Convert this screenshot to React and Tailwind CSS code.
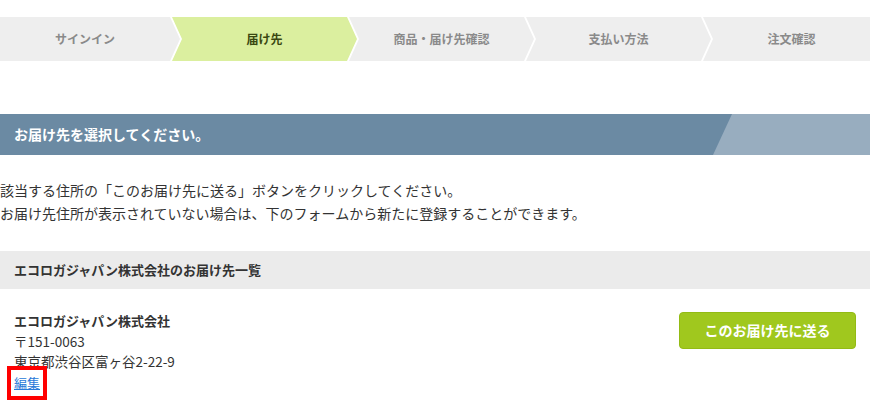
import React from 'react';

const steps = [
  { label: 'サインイン', active: false },
  { label: '届け先', active: true },
  { label: '商品・届け先確認', active: false },
  { label: '支払い方法', active: false },
  { label: '注文確認', active: false },
];

const StepBar = () => (
  <div className="flex h-[44px]">
    {steps.map((s, i) => {
      let shape = '';
      if (i === 0) {
        shape = 'w-[180px] pr-[10px] [clip-path:polygon(0_0,170px_0,100%_50%,170px_100%,0_100%)]';
      } else if (i === steps.length - 1) {
        shape = 'flex-1 -ml-[8px] pl-[10px] [clip-path:polygon(0_0,100%_0,100%_100%,0_100%,10px_50%)]';
      } else {
        shape = 'w-[185px] -ml-[8px] [clip-path:polygon(0_0,calc(100%_-_10px)_0,100%_50%,calc(100%_-_10px)_100%,0_100%,10px_50%)]';
      }
      return (
        <div
          key={i}
          className={`${shape} flex items-center justify-center text-[12px] font-bold ${
            s.active ? 'bg-[#dbef9f] text-[#3a4812]' : 'bg-[#eeeeee] text-[#8a8a8a]'
          }`}
        >
          {s.label}
        </div>
      );
    })}
  </div>
);

export default function App() {
  return (
    <div className="w-[870px] h-[407px] overflow-hidden bg-white text-[#333] font-['Noto_Sans_CJK_JP','Noto_Sans',sans-serif] pt-[17px]">
      <StepBar />

      {/* section title */}
      <div className="relative mt-[53px] h-[41px] bg-[#6b8aa3] flex items-center px-[14px] overflow-hidden">
        <div className="absolute right-0 top-0 h-full w-[157px] bg-[#98adbf] [clip-path:polygon(19px_0,100%_0,100%_100%,0_100%)]" />
        <h2 className="relative text-white text-[14px] font-bold">お届け先を選択してください。</h2>
      </div>

      <div className="mt-[24px] text-[14px] leading-[23px] text-[#333]">
        <p>該当する住所の「このお届け先に送る」ボタンをクリックしてください。</p>
        <p>お届け先住所が表示されていない場合は、下のフォームから新たに登録することができます。</p>
      </div>

      <div className="mt-[26px] h-[38px] bg-[#ebebeb] flex items-center px-[14px]">
        <h3 className="text-[13px] font-bold text-[#333]">エコロガジャパン株式会社のお届け先一覧</h3>
      </div>

      <div className="flex justify-between items-start pt-[22px] px-[14px]">
        <div className="text-[13px] leading-[20px] text-[#333]">
          <p className="font-bold">エコロガジャパン株式会社</p>
          <p className="text-[13.5px]">〒151-0063</p>
          <p className="text-[13.5px]">東京都渋谷区富ヶ谷2-22-9</p>
          <a
            href="#"
            className="inline-block mt-[2px] text-[#2a7ad8] underline outline-[4px] outline-solid outline-[#ff0000] outline-offset-[3px]"
          >
            編集
          </a>
        </div>
        <button className="mt-[1px] w-[177px] h-[37px] rounded-[4px] bg-[#a0c81e] border border-[#93bb14] text-white text-[14px] font-bold">
          このお届け先に送る
        </button>
      </div>
    </div>
  );
}
